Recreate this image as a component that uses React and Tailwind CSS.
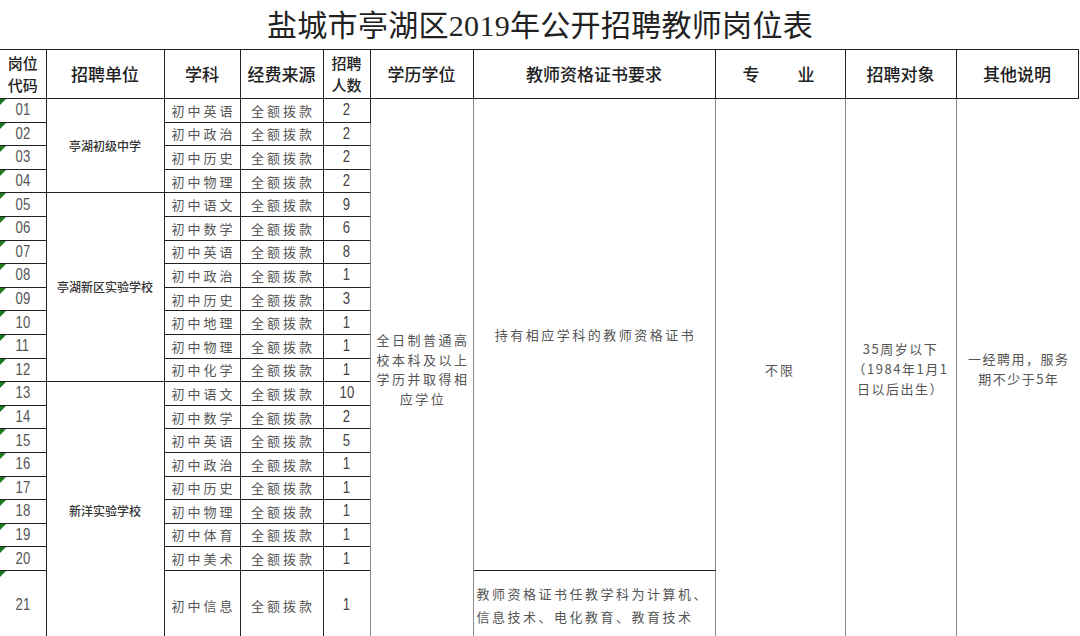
import React from "react";

const rows = [
  { code: "01", subject: "初中英语", count: "2" },
  { code: "02", subject: "初中政治", count: "2" },
  { code: "03", subject: "初中历史", count: "2" },
  { code: "04", subject: "初中物理", count: "2" },
  { code: "05", subject: "初中语文", count: "9" },
  { code: "06", subject: "初中数学", count: "6" },
  { code: "07", subject: "初中英语", count: "8" },
  { code: "08", subject: "初中政治", count: "1" },
  { code: "09", subject: "初中历史", count: "3" },
  { code: "10", subject: "初中地理", count: "1" },
  { code: "11", subject: "初中物理", count: "1" },
  { code: "12", subject: "初中化学", count: "1" },
  { code: "13", subject: "初中语文", count: "10" },
  { code: "14", subject: "初中数学", count: "2" },
  { code: "15", subject: "初中英语", count: "5" },
  { code: "16", subject: "初中政治", count: "1" },
  { code: "17", subject: "初中历史", count: "1" },
  { code: "18", subject: "初中物理", count: "1" },
  { code: "19", subject: "初中体育", count: "1" },
  { code: "20", subject: "初中美术", count: "1" },
  { code: "21", subject: "初中信息", count: "1" },
];

const schools = {
  0: { name: "亭湖初级中学", span: 4 },
  4: { name: "亭湖新区实验学校", span: 8 },
  12: { name: "新洋实验学校", span: 9 },
};

const cjk = { fontFamily: '"Noto Sans CJK SC", "Liberation Sans", sans-serif' };
const num = { fontFamily: '"Liberation Sans", "Noto Sans CJK SC", sans-serif' };

function Flag() {
  return (
    <span className="absolute left-0 top-0 w-0 h-0 border-t-[6px] border-t-[#1f7a1f] border-r-[6px] border-r-transparent" />
  );
}

export default function App() {
  const cell = "border border-[#222] p-0 text-center align-middle";
  const side = "border border-[#222] border-x-[#8a8a8a] p-0 text-center align-middle";

  return (
    <div className="w-[1080px] h-[636px] overflow-hidden bg-white" style={cjk}>
      <div
        className="h-[49px] flex items-center justify-center text-[30px] text-[#222] leading-none pt-[2px] tracking-[0.3px]"
        style={{ fontFamily: '"Liberation Serif", "Noto Sans CJK SC", serif' }}
      >
        盐城市亭湖区2019年公开招聘教师岗位表
      </div>

      <table className="table-fixed border-collapse w-[1078px] text-[#555]">
        <colgroup>
          <col className="w-[46px]" />
          <col className="w-[118px]" />
          <col className="w-[76px]" />
          <col className="w-[83px]" />
          <col className="w-[47px]" />
          <col className="w-[103px]" />
          <col className="w-[242px]" />
          <col className="w-[130px]" />
          <col className="w-[111px]" />
          <col className="w-[122px]" />
        </colgroup>
        <thead>
          <tr className="h-[49px] text-[17px] leading-[22px] font-medium text-[#222]">
            <th className={`${cell} border-l-0 font-medium text-[15px] leading-[22px]`}>
              <div>岗位</div>
              <div>代码</div>
            </th>
            <th className={`${cell} font-medium`}>招聘单位</th>
            <th className={`${cell} font-medium`}>学科</th>
            <th className={`${cell} font-medium`}>经费来源</th>
            <th className={`${cell} font-medium text-[15px] leading-[22px]`}>
              <div>招聘</div>
              <div>人数</div>
            </th>
            <th className={`${cell} font-medium`}>学历学位</th>
            <th className={`${cell} font-medium`}>教师资格证书要求</th>
            <th className={`${cell} font-medium`}>
              <span className="inline-flex gap-[38px] pr-[3px]"><span>专</span><span>业</span></span>
            </th>
            <th className={`${cell} font-medium`}>招聘对象</th>
            <th className={`${cell} font-medium`}>其他说明</th>
          </tr>
        </thead>
        <tbody>
          {rows.map((r, i) => (
            <tr key={r.code} className={i === 20 ? "h-[70px]" : "h-[23.6px]"}>
              <td className={`${cell} border-l-0 relative text-[16px] leading-none`} style={num}>
                <Flag />
                <span className="inline-block scale-x-[0.82]">{r.code}</span>
              </td>
              {schools[i] && (
                <td rowSpan={schools[i].span} className={`${cell} text-[12px] font-medium text-[#333]`}>
                  {schools[i].name}
                </td>
              )}
              <td className={`${cell} text-[13px] leading-none tracking-[3px] pl-[3px]`}>{r.subject}</td>
              <td className={`${cell} text-[13px] leading-none tracking-[3px] pl-[3px]`}>全额拨款</td>
              <td className={`${cell} text-[16px] leading-none text-[#444]`} style={num}>
                <span className="inline-block scale-x-[0.82]">{r.count}</span>
              </td>
              {i === 0 && (
                <>
                  <td rowSpan={21} className={`${side} text-[13px] leading-[19.5px] tracking-[2.5px] pl-[3px]`}>
                    全日制普通高<br />校本科及以上<br />学历并取得相<br />应学位
                  </td>
                  <td rowSpan={20} className={`${side} text-[13px] tracking-[2.5px] pl-[3px]`}>
                    持有相应学科的教师资格证书
                  </td>
                  <td rowSpan={21} className={`${side} text-[13px] tracking-[2px]`}>不限</td>
                  <td rowSpan={21} className={`${side} text-[13px] leading-[20px] tracking-[1.5px]`}>
                    35周岁以下<br />（1984年1月1<br />日以后出生）
                  </td>
                  <td rowSpan={21} className={`${side} border-r-0 text-[13px] leading-[20px] tracking-[1.5px] pl-[3px]`}>
                    一经聘用，服务<br />期不少于5年
                  </td>
                </>
              )}
              {i === 20 && (
                <td className={`${side} text-left text-[13px] leading-[23px] tracking-[2.5px] pl-[3px]`}>
                  教师资格证书任教学科为计算机、<br />信息技术、电化教育、教育技术
                </td>
              )}
            </tr>
          ))}
        </tbody>
      </table>
    </div>
  );
}
